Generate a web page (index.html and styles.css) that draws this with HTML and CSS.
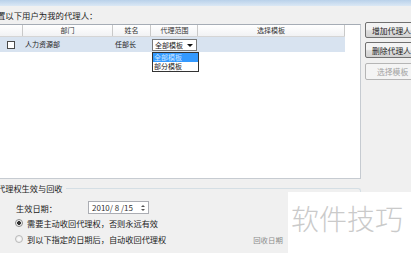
FILE: index.html
```html
<!DOCTYPE html>
<html lang="zh-CN">
<head>
  <meta charset="UTF-8">
  <title>代理人设置</title>
  <link rel="stylesheet" href="styles.css">
</head>
<body>
  <div class="window">
    <div class="titlebar"></div>
    <div class="prompt">置以下用户为我的代理人：</div>

    <div class="main">
      <div class="list">
        <div class="row head">
          <div class="cell c-check"></div>
          <div class="cell c-dept">部门</div>
          <div class="cell c-name">姓名</div>
          <div class="cell c-range">代理范围</div>
          <div class="cell c-tpl">选择模板</div>
        </div>
        <div class="row item">
          <div class="cell c-check"><span class="checkbox"></span></div>
          <div class="cell c-dept left">人力资源部</div>
          <div class="cell c-name left">任部长</div>
          <div class="cell c-range">
            <div class="combo">全部模板<span class="arrow"></span></div>
          </div>
          <div class="cell c-tpl"></div>
        </div>
        <!-- open dropdown of the combo -->
        <div class="droplist">
          <div class="opt active">全部模板</div>
          <div class="opt">部分模板</div>
        </div>
      </div>

      <div class="buttons">
        <button class="btn">增加代理人</button>
        <button class="btn">删除代理人</button>
        <button class="btn disabled">选择模板</button>
      </div>
    </div>

    <div class="group">
      <div class="legend">代理权生效与回收</div>
      <div class="date-line">
        <span class="label">生效日期：</span>
        <div class="datebox">
          <span>2010/ 8 /15</span>
          <span class="spin"><i class="up"></i><i class="down"></i></span>
        </div>
      </div>
      <div class="radio-line">
        <span class="radio on"></span>需要主动收回代理权，否则永远有效
      </div>
      <div class="radio-line">
        <span class="radio"></span>到以下指定的日期后，自动收回代理权
        <span class="muted">回收日期</span>
      </div>
    </div>
  </div>

  <div class="watermark">软件技巧</div>
</body>
</html>
```

FILE: styles.css
```css
* {
  margin: 0;
  padding: 0;
  box-sizing: border-box;
}

body {
  width: 411px;
  height: 253px;
  overflow: hidden;
  background: #f0f0f0;
  font-family: "Noto Sans CJK SC", "Noto Sans", sans-serif;
  color: #222;
  position: relative;
}

.window {
  width: 411px;
  overflow: hidden;
}

.titlebar {
  height: 6px;
  background: linear-gradient(#b9d1ea, #dbe8f5);
}

.prompt {
  height: 18px;
  margin-left: -3px;
  font-size: 8.4px;
  line-height: 18px;
  color: #1e1e1e;
}

.main {
  display: flex;
  align-items: flex-start;
}

.list {
  position: relative;
  flex: none;
  width: 363px;
  height: 155px;
  margin-left: -2px;
  background: #fff;
  border: 1px solid #a5acb5;
  border-right-color: #c6cbd1;
  border-bottom-color: #c6cbd1;
}

.row {
  display: flex;
  width: 346px;
}

.head {
  height: 12px;
  background: linear-gradient(#fff, #f1f2f4);
  border-bottom: 1px solid #d5d5d5;
}

.head .cell {
  border-right: 1px solid #c9c9c9;
  font-size: 7px;
  line-height: 11px;
  text-align: center;
  color: #333;
}

.item {
  height: 15px;
  background: #d8e3f0;
}

.item .cell {
  font-size: 7px;
  line-height: 15px;
}

.cell.left {
  padding-left: 2px;
}

.c-check { width: 24px; display: flex; align-items: center; justify-content: center; }
.c-dept { width: 90px; }
.c-name { width: 38px; }
.c-range { width: 47px; padding-left: 1px; }
.c-tpl { width: 147px; }

.checkbox {
  width: 8px;
  height: 8px;
  border: 1px solid #4a4a4a;
  background: #fff;
}

.combo {
  display: flex;
  align-items: center;
  justify-content: space-between;
  width: 45px;
  height: 12px;
  margin-top: 2px;
  padding: 0 3px 0 2px;
  background: #fff;
  border: 1px solid #7a7a7a;
  line-height: 10px;
}

.arrow {
  width: 0;
  height: 0;
  border-left: 3px solid transparent;
  border-right: 3px solid transparent;
  border-top: 3px solid #111;
}

.droplist {
  position: absolute;
  left: 153px;
  top: 27px;
  width: 47px;
  background: #fff;
  border: 1px solid #333;
  font-size: 7px;
  line-height: 9px;
}

.opt {
  padding-left: 1px;
}

.opt.active {
  background: #3399ff;
  color: #cfe6ff;
}

.buttons {
  display: flex;
  flex-direction: column;
  gap: 4px;
  margin-left: 4px;
  margin-top: -2px;
}

.btn {
  width: 62px;
  height: 16px;
  padding-left: 6px;
  text-align: left;
  font-family: inherit;
  font-size: 7.8px;
  color: #222;
  background: linear-gradient(#f3f3f3 45%, #dddddd 55%, #d2d2d2);
  border: 1px solid #707070;
  border-radius: 2px;
  white-space: nowrap;
}

.btn.disabled {
  height: 17px;
  margin-top: 1px;
  padding-left: 11px;
  color: #a3a3a3;
  background: #f4f4f4;
  border-color: #b5b5b5;
}

.group {
  position: relative;
  width: 364px;
  height: 70px;
  margin-top: 9px;
  margin-left: -3px;
  border-top: 1px solid #d5dfe5;
  border-right: 1px solid #d5dfe5;
  border-radius: 0 3px 0 0;
}

.legend {
  position: absolute;
  top: -6px;
  left: 0;
  padding-right: 3px;
  background: #f0f0f0;
  font-size: 8.2px;
  line-height: 11px;
}

.date-line {
  display: flex;
  align-items: center;
  height: 15px;
  margin-top: 11px;
  padding-left: 19px;
  font-size: 8.2px;
}

.label {
  width: 72px;
}

.datebox {
  display: flex;
  align-items: center;
  justify-content: space-between;
  width: 61px;
  height: 13px;
  padding: 0 1px 0 3px;
  background: #fff;
  border: 1px solid #abadb3;
  font-size: 8px;
  color: #333;
}

.spin {
  display: flex;
  flex-direction: column;
  gap: 2px;
  width: 9px;
  padding-left: 1px;
}

.spin i {
  display: block;
  width: 0;
  height: 0;
  margin: 0 auto;
  border-left: 2px solid transparent;
  border-right: 2px solid transparent;
}

.spin .up { border-bottom: 2px solid #555; }
.spin .down { border-top: 2px solid #555; }

.radio-line {
  display: flex;
  align-items: center;
  height: 16px;
  padding-left: 18px;
  font-size: 8.2px;
  color: #222;
}

.date-line + .radio-line {
  margin-top: 0;
}

.radio {
  width: 8px;
  height: 8px;
  margin-right: 4px;
  border-radius: 50%;
  border: 1px solid #b9b9b9;
  background: radial-gradient(#fff, #e4e4e4);
}

.radio.on {
  border-color: #8a8a8a;
  background: radial-gradient(circle, #333 0 1.6px, #f2f2f2 2.2px);
}

.muted {
  margin-left: 87px;
  color: #8c8c8c;
  font-size: 7.4px;
}

.watermark {
  position: absolute;
  left: 288px;
  top: 192px;
  width: 123px;
  height: 61px;
  padding: 9px 0 0 3px;
  background: #fff;
  font-size: 28px;
  font-weight: 300;
  line-height: 34px;
  color: #cacaca;
}
```
